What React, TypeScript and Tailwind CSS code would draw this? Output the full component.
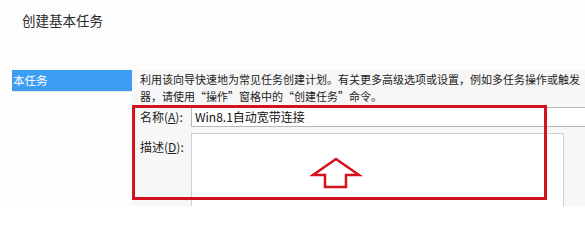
export default function App() {
  return (
    <div className="relative w-[585px] h-[206px] overflow-hidden bg-[#fdfdfd] font-['Noto_Sans_CJK_SC','Noto_Sans',sans-serif] text-[#1e1e1e]">
      {/* Header */}
      <div className="h-[70px] pl-[22px] pt-[10px] text-[13.5px] leading-[20px] text-[#2a2a2a]">
        创建基本任务
      </div>

      {/* Body */}
      <div className="flex h-[136px]">
        {/* Sidebar */}
        <div className="w-[132px] shrink-0 pl-[12px]">
          <div className="h-[21px] bg-[#3d9df2] pl-[1px] text-[11.5px] leading-[21px] text-white whitespace-nowrap">
            本任务
          </div>
          <div className="h-px bg-[#e6e6e6]"></div>
        </div>

        {/* Main */}
        <div className="flex-1 min-w-0 bg-[#f7f7f7] pl-[8px]">
          <p className="pt-[1px] text-[11px] leading-[17px] text-[#222] whitespace-nowrap">
            利用该向导快速地为常见任务创建计划。有关更多高级选项或设置，例如多任务操作或触发
            <br />
            器，请使用“操作”窗格中的“创建任务”命令。
          </p>

          <div className="mt-[2px] flex flex-col gap-[6px]">
            <div className="flex items-center h-[20px]">
              <label className="w-[51px] shrink-0 text-[12px] text-[#222]">
                名称(<span className="underline">A</span>):
              </label>
              <div className="flex-1 -mr-[6px] h-[20px] border border-[#b5b8be] bg-white pl-[3px] text-[12px] leading-[18px] text-[#111] whitespace-nowrap">
                Win8.1自动宽带连接
              </div>
            </div>
            <div className="flex items-start">
              <label className="w-[51px] shrink-0 pt-[5px] text-[12px] text-[#222]">
                描述(<span className="underline">D</span>):
              </label>
              <div className="flex-1 mr-[21px] h-[90px] border border-[#c8d0da] bg-white"></div>
            </div>
          </div>
        </div>
      </div>

      {/* Red annotation box */}
      <div className="absolute left-[132px] top-[105px] w-[415px] h-[95px] border-[3px] border-[#d3121e]"></div>

      {/* Red arrow */}
      <svg className="absolute left-[310px] top-[156px]" width="54" height="34" viewBox="0 0 54 34">
        <polygon
          points="26,3 49,19 36,19 36,31 15,31 15,19 3,19"
          fill="#ffffff"
          stroke="#d3121e"
          strokeWidth="2.5"
          strokeLinejoin="miter"
        />
      </svg>
    </div>
  );
}
